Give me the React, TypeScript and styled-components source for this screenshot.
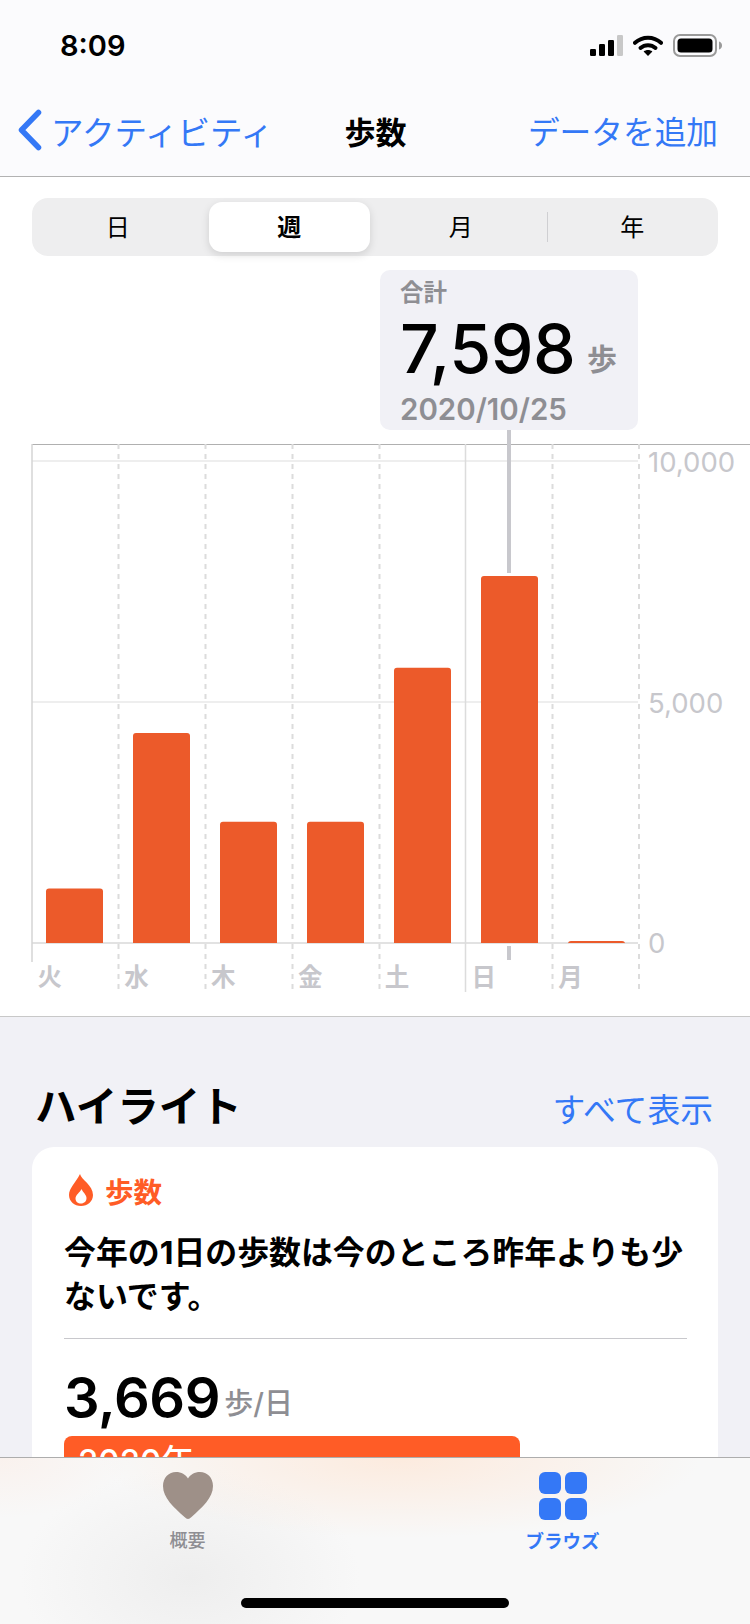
import React from 'react';
import styled, { createGlobalStyle } from 'styled-components';

const GlobalStyle = createGlobalStyle`
  html, body {
    margin: 0;
    padding: 0;
    background: #f1f1f6;
    font-family: Inter, "Noto Sans CJK JP", sans-serif;
    color: #000;
  }
  * { box-sizing: border-box; }
`;

const BLUE = '#3478f6';
const GREY = '#8e8e93';
const LIGHT = '#c7c7cc';

const Page = styled.div`
  width: 750px;
  height: 1624px;
  display: flex;
  flex-direction: column;
  overflow: hidden;
`;

const Header = styled.header`
  height: 177px;
  flex: none;
  background: #fbfbfd;
  border-bottom: 1px solid #b2b2b2;
`;

const StatusBar = styled.div`
  height: 88px;
  padding: 2px 28px 0 60px;
  display: flex;
  align-items: center;
  justify-content: space-between;
`;

const Clock = styled.span`
  font-size: 29px;
  font-weight: 600;
`;

const StatusIcons = styled.div`
  display: flex;
  align-items: center;
  gap: 10px;
`;

const NavBar = styled.nav`
  height: 88px;
  padding: 0 32px 4px 33px;
  display: grid;
  grid-template-columns: 1fr auto 1fr;
  align-items: center;
`;

const BackLink = styled.div`
  display: flex;
  align-items: center;
  gap: 9px;
  margin-left: -15px;
  color: ${BLUE};
  font-size: 32.5px;
  white-space: nowrap;
`;

const NavTitle = styled.div`
  font-size: 31px;
  font-weight: 700;
`;

const NavAction = styled.div`
  justify-self: end;
  color: ${BLUE};
  font-size: 31.7px;
  white-space: nowrap;
`;

const ChartPanel = styled.section`
  height: 840px;
  flex: none;
  background: #fff;
  border-bottom: 1px solid #c8c8c8;
  padding-top: 21px;
`;

const Segments = styled.div`
  width: 686px;
  height: 58px;
  margin-left: 32px;
  background: #eeeeef;
  border-radius: 16px;
  display: grid;
  grid-template-columns: repeat(4, 1fr);
  align-items: center;
`;

const Segment = styled.div<{ $active?: boolean; $divider?: boolean }>`
  height: 50px;
  margin: 0 5px;
  padding-bottom: 3px;
  display: flex;
  align-items: center;
  justify-content: center;
  position: relative;
  font-size: 24px;
  font-weight: ${({ $active }) => ($active ? 700 : 400)};
  background: ${({ $active }) => ($active ? '#fff' : 'transparent')};
  border-radius: 13px;
  box-shadow: ${({ $active }) => ($active ? '0 3px 8px rgba(0, 0, 0, 0.13)' : 'none')};

  ${({ $divider }) =>
    $divider &&
    `&::after {
      content: '';
      position: absolute;
      right: -6px;
      top: 10px;
      height: 30px;
      width: 1px;
      background: #cfcfd2;
    }`}
`;

const Callout = styled.div`
  width: 258px;
  height: 160px;
  margin: 14px 0 0 380px;
  padding: 8px 21px 0 20px;
  background: #f1f1f6;
  border-radius: 10px;
`;

const CalloutLabel = styled.div`
  font-size: 23.5px;
  line-height: 30px;
  font-weight: 600;
  color: ${GREY};
`;

const CalloutValue = styled.div`
  display: flex;
  align-items: flex-start;
  justify-content: space-between;
  height: 83px;
  font-size: 68px;
  line-height: 80px;
  font-weight: 500;
  letter-spacing: -0.5px;
`;

const CalloutUnit = styled.span`
  margin-top: 33px;
  font-size: 30px;
  line-height: 36px;
  font-weight: 600;
  letter-spacing: 0;
  color: ${GREY};
`;

const CalloutDate = styled.div`
  font-size: 29.5px;
  line-height: 36px;
  font-weight: 600;
  color: ${GREY};
`;

const ChartSvg = styled.svg`
  display: block;
`;

const AxisText = styled.text`
  font-family: Inter, "Noto Sans CJK JP", sans-serif;
  font-size: 27.5px;
  fill: ${LIGHT};
`;

const DayText = styled.text`
  font-family: Inter, "Noto Sans CJK JP", sans-serif;
  font-size: 24.5px;
  font-weight: 700;
  fill: ${LIGHT};
`;

const Main = styled.main`
  flex: 1;
  min-height: 0;
  overflow: hidden;
  padding: 0 32px;
`;

const SectionHead = styled.div`
  height: 130px;
  padding: 0 5px 0 5px;
  display: flex;
  align-items: flex-end;
  justify-content: space-between;
`;

const SectionTitle = styled.h2`
  margin: 0 0 16px -2px;
  font-size: 41.5px;
  line-height: 48px;
  font-weight: 700;
`;

const SectionLink = styled.a`
  margin-bottom: 17px;
  font-size: 32.8px;
  line-height: 40px;
  color: ${BLUE};
  white-space: nowrap;
`;

const Card = styled.article`
  background: #fff;
  border-radius: 22px;
  padding: 26px 31px 0 32px;
`;

const CardHead = styled.div`
  display: flex;
  align-items: center;
  gap: 11px;
  height: 34px;
  padding-left: 4px;
  color: #ff5c26;
  font-size: 28.5px;
  font-weight: 700;
`;

const CardText = styled.p`
  margin: 24px -3px 0 0;
  font-size: 31.9px;
  line-height: 44px;
  font-weight: 700;
`;

const CardRule = styled.hr`
  margin: 19px 0 0;
  border: none;
  border-top: 1px solid #c8c8cc;
`;

const Stat = styled.div`
  display: flex;
  align-items: flex-end;
  gap: 4px;
  margin-top: 24px;
  height: 71px;
`;

const StatValue = styled.span`
  font-size: 56px;
  line-height: 71px;
  font-weight: 600;
  letter-spacing: -0.4px;
`;

const StatUnit = styled.span`
  margin-bottom: 12px;
  font-size: 29px;
  line-height: 36px;
  font-weight: 500;
  color: ${GREY};
`;

const YearBar = styled.div`
  width: 456px;
  height: 60px;
  margin-top: 2px;
  padding: 5px 14px;
  background: #ff5c26;
  border-radius: 8px;
  color: #fff;
  font-size: 33px;
  line-height: 40px;
  font-weight: 500;
`;

const TabBar = styled.footer`
  height: 167px;
  flex: none;
  border-top: 1px solid #adadad;
  background:
    radial-gradient(ellipse 300px 80px at 400px 0, rgba(255, 226, 205, 0.6), transparent),
    radial-gradient(ellipse 170px 110px at 190px 120px, #eeeeee, transparent),
    radial-gradient(ellipse 130px 60px at 0 0, rgba(250, 240, 235, 0.8), transparent),
    #f8f8f8;
  display: flex;
  flex-direction: column;
  align-items: center;
`;

const TabRow = styled.div`
  width: 100%;
  height: 140px;
  padding-top: 14px;
  display: grid;
  grid-template-columns: 1fr 1fr;
`;

const TabItem = styled.div<{ $active?: boolean }>`
  display: flex;
  flex-direction: column;
  align-items: center;
  font-size: ${({ $active }) => ($active ? '18.5px' : '18px')};
  line-height: 22px;
  font-weight: ${({ $active }) => ($active ? 700 : 500)};
  color: ${({ $active }) => ($active ? BLUE : GREY)};
`;

const TabIcon = styled.div`
  height: 48px;
  margin-bottom: 10px;
`;

const TileGrid = styled.div`
  display: grid;
  grid-template-columns: 22px 22px;
  grid-auto-rows: 22px;
  gap: 4px;
`;

const Tile = styled.span`
  background: ${BLUE};
  border-radius: 6px;
`;

const HomeIndicator = styled.div`
  width: 268px;
  height: 10px;
  border-radius: 5px;
  background: #000;
`;

const SignalIcon = () => (
  <svg width="33" height="21" viewBox="0 0 33 21">
    <rect x="0" y="14" width="6" height="7" rx="1.2" fill="#000" />
    <rect x="9" y="9" width="6" height="12" rx="1.2" fill="#000" />
    <rect x="18" y="5" width="6" height="16" rx="1.2" fill="#000" />
    <rect x="27" y="0" width="6" height="21" rx="1.2" fill="#c8c8c8" />
  </svg>
);

const WifiIcon = () => (
  <svg width="30" height="21" viewBox="0 0 30 21">
    <path d="M2 7.8C9.5 1 20.5 1 28 7.8" fill="none" stroke="#000" strokeWidth="4" strokeLinecap="round" />
    <path d="M7.5 13C11.8 9.2 18.2 9.2 22.5 13" fill="none" stroke="#000" strokeWidth="4" strokeLinecap="round" />
    <path d="M15 21L10.6 16.6C13.2 14.6 16.8 14.6 19.4 16.6Z" fill="#000" />
  </svg>
);

const BatteryIcon = () => (
  <svg width="49" height="23" viewBox="0 0 49 23">
    <rect x="1" y="1" width="42" height="21" rx="6" fill="none" stroke="#9a9a9a" strokeWidth="2" />
    <rect x="4.5" y="4.5" width="35" height="14" rx="3.5" fill="#000" />
    <path d="M46 7.5C47.8 8 49 9.5 49 11.5S47.8 15 46 15.5Z" fill="#9a9a9a" />
  </svg>
);

const ChevronIcon = () => (
  <svg width="24" height="42" viewBox="0 0 24 42">
    <path d="M20.5 3.5L3.5 21L20.5 38.5" fill="none" stroke={BLUE} strokeWidth="5.5" strokeLinecap="round" strokeLinejoin="round" />
  </svg>
);

const FlameIcon = () => (
  <svg width="26" height="32" viewBox="0 0 26 32">
    <path
      fillRule="evenodd"
      fill="#ff5c26"
      d="M12 0C13 5.5 25 11 25 21C25 27.5 19.5 32 13 32C6.5 32 1 27.5 1 21C1 14 7.5 9 12 0ZM13 29.5C16.3 29.5 18.5 27.2 18.5 24C18.5 20.8 15 18.5 13.5 15C12 18.5 7.5 20.8 7.5 24.5C7.5 27.5 9.8 29.5 13 29.5Z"
    />
  </svg>
);

const HeartIcon = () => (
  <svg width="50" height="47" viewBox="0 0 50 47">
    <path
      fill="#9e9088"
      d="M25 47C23.8 47 22.8 46.2 21.5 45C11 35.5 0 26 0 14C0 5.5 6 0 13 0C18.5 0 22.5 2.5 25 6.5C27.5 2.5 31.5 0 37 0C44 0 50 5.5 50 14C50 26 39 35.5 28.5 45C27.2 46.2 26.2 47 25 47Z"
    />
  </svg>
);

const DAYS = [
  { label: '火', steps: 1130 },
  { label: '水', steps: 4350 },
  { label: '木', steps: 2510 },
  { label: '金', steps: 2510 },
  { label: '土', steps: 5700 },
  { label: '日', steps: 7598 },
  { label: '月', steps: 40 },
];

// chart coordinates: svg y 0 is the callout's bottom edge
const ZERO_Y = 513;
const PER_STEP = 483 / 10000;
const LEFT = 32;
const PITCH = 87;

const StepsChart = () => (
  <ChartSvg width="750" height="586" viewBox="0 0 750 586">
    <line x1="32" y1="14.5" x2="750" y2="14.5" stroke="#b0b0b0" />
    <line x1="32" y1="31" x2="638" y2="31" stroke="#eeeeee" strokeWidth="2" />
    <line x1="32" y1="272" x2="638" y2="272" stroke="#eeeeee" strokeWidth="2" />
    <line x1="32" y1="513" x2="638" y2="513" stroke="#e2e2e2" strokeWidth="2" />
    <line x1="32" y1="14" x2="32" y2="532" stroke="#d4d4d4" strokeWidth="1.5" />
    <line x1="465.5" y1="14" x2="465.5" y2="562" stroke="#dcdcdc" strokeWidth="1.5" />
    {[118.5, 205.5, 292.5, 379.5, 552.5, 639].map((x) => (
      <line key={x} x1={x} y1="14" x2={x} y2="562" stroke="#dcdcdc" strokeWidth="2" strokeDasharray="5 5" />
    ))}
    <line x1="509" y1="0" x2="509" y2="143" stroke="#c8c8cd" strokeWidth="4" />
    <line x1="509" y1="516" x2="509" y2="530" stroke="#c8c8cd" strokeWidth="4" />
    {DAYS.map((day, i) => {
      const x = LEFT + PITCH * i;
      const h = Math.max(day.steps * PER_STEP, 2);
      return (
        <g key={day.label}>
          <path
            d={`M${x + 14} ${ZERO_Y}V${ZERO_Y - h + 3}q0 -3 3 -3H${x + 68}q3 0 3 3V${ZERO_Y}Z`}
            fill="#ec5a2a"
          />
          <DayText x={x + 5.5 - i * 0.2} y="556">
            {day.label}
          </DayText>
        </g>
      );
    })}
    <AxisText x="648" y="42">10,000</AxisText>
    <AxisText x="648" y="283">5,000</AxisText>
    <AxisText x="648" y="523">0</AxisText>
  </ChartSvg>
);

const App: React.FC = () => {
  return (
    <Page>
      <GlobalStyle />
      <Header>
        <StatusBar>
          <Clock>8:09</Clock>
          <StatusIcons>
            <SignalIcon />
            <WifiIcon />
            <BatteryIcon />
          </StatusIcons>
        </StatusBar>
        <NavBar>
          <BackLink>
            <ChevronIcon />
            アクティビティ
          </BackLink>
          <NavTitle>歩数</NavTitle>
          <NavAction>データを追加</NavAction>
        </NavBar>
      </Header>
      <ChartPanel>
        <Segments>
          <Segment>日</Segment>
          <Segment $active>週</Segment>
          <Segment $divider>月</Segment>
          <Segment>年</Segment>
        </Segments>
        <Callout>
          <CalloutLabel>合計</CalloutLabel>
          <CalloutValue>
            7,598
            <CalloutUnit>歩</CalloutUnit>
          </CalloutValue>
          <CalloutDate>2020/10/25</CalloutDate>
        </Callout>
        <StepsChart />
      </ChartPanel>
      <Main>
        <SectionHead>
          <SectionTitle>ハイライト</SectionTitle>
          <SectionLink>すべて表示</SectionLink>
        </SectionHead>
        <Card>
          <CardHead>
            <FlameIcon />
            歩数
          </CardHead>
          <CardText>今年の1日の歩数は今のところ昨年よりも少ないです。</CardText>
          <CardRule />
          <Stat>
            <StatValue>3,669</StatValue>
            <StatUnit>歩/日</StatUnit>
          </Stat>
          <YearBar>2020年</YearBar>
        </Card>
      </Main>
      <TabBar>
        <TabRow>
          <TabItem>
            <TabIcon>
              <HeartIcon />
            </TabIcon>
            概要
          </TabItem>
          <TabItem $active>
            <TabIcon>
              <TileGrid>
                <Tile />
                <Tile />
                <Tile />
                <Tile />
              </TileGrid>
            </TabIcon>
            ブラウズ
          </TabItem>
        </TabRow>
        <HomeIndicator />
      </TabBar>
    </Page>
  );
};

export default App;
